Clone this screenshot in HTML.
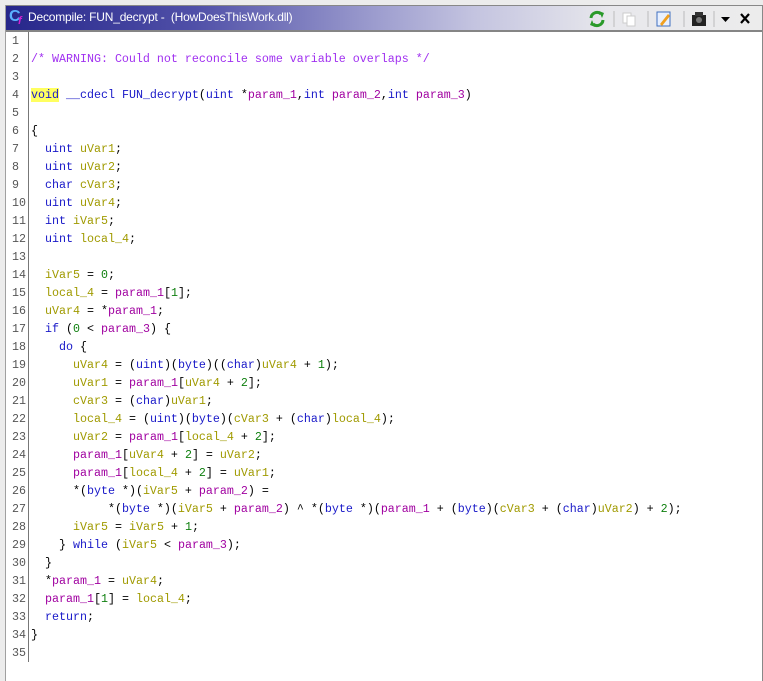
<!DOCTYPE html>
<html><head><meta charset="utf-8"><style>
body{margin:0;width:763px;height:681px;background:#ececec;position:relative;overflow:hidden;font-family:"Liberation Sans",sans-serif}
#win{position:absolute;left:5px;top:5px;width:756px;height:676px;background:#fff;border-left:1px solid #a0a0a0;border-right:2px solid #888}
#title{position:absolute;left:0;top:0;right:0;height:24px;border-top:1px solid #888;border-bottom:2px solid #858585;background:linear-gradient(90deg,#26268a 0%,#5050a8 25%,#a0a0d0 50%,#c4c4e0 62%,#e8e8ec 80%,#ececec 100%)}
#title .t{position:absolute;left:22px;top:4px;color:#fff;font-size:12px;letter-spacing:-0.2px}
#title .ic{position:absolute;left:3px;top:2px;color:#5ab0ff;font-weight:bold;font-size:16px}
#title .ic2{position:absolute;left:12px;top:9px;color:#d020d0;font-style:italic;font-weight:bold;font-size:11px}
#code{position:absolute;left:0;top:27px;font-family:"Liberation Mono",monospace;font-size:11.67px;line-height:18px;white-space:pre}
.ln{position:absolute;left:6px;width:20px;color:#555;text-align:left}
#sep{position:absolute;left:22px;top:27px;width:1px;height:630px;background:#777}
.l{position:absolute;left:25px;color:#000}
.k{color:#1818c8}.v{color:#a09a00}.p{color:#a000a0}.n{color:#108010}.c{color:#a030f0}.hl{background:#ffff60}
</style></head><body>
<div id="win">
<div id="title"><span class="ic">C</span><span class="ic2">f</span><span class="t">Decompile: FUN_decrypt - &nbsp;(HowDoesThisWork.dll)</span>
<svg style="position:absolute;left:580px;top:3px" width="170" height="20">
<path d="M5 9a6 6 0 0 1 10-4" fill="none" stroke="#2a9a2a" stroke-width="3"/><path d="M17 11a6 6 0 0 1-10 4" fill="none" stroke="#2a9a2a" stroke-width="3"/><path d="M13 2l5 2-2 5z M9 18l-5-2 2-5z" fill="#2a9a2a"/>
<line x1="28" y1="2" x2="28" y2="18" stroke="#bbb"/>
<rect x="37" y="4" width="8" height="10" fill="#fff" stroke="#ccc"/><rect x="41" y="7" width="8" height="10" fill="#fff" stroke="#ccc"/>
<line x1="62" y1="2" x2="62" y2="18" stroke="#bbb"/>
<rect x="71" y="3" width="13" height="14" fill="#e8f0ff" stroke="#4070c0"/><path d="M74 15l8-10 2 2-8 10z" fill="#f0a020"/>
<line x1="98" y1="2" x2="98" y2="18" stroke="#bbb"/>
<rect x="106" y="6" width="14" height="11" fill="#222"/><rect x="109" y="3" width="8" height="4" fill="#333"/><circle cx="113" cy="11" r="3" fill="#777"/>
<line x1="128" y1="2" x2="128" y2="18" stroke="#bbb"/>
<path d="M135 8h9l-4.5 5z" fill="#000"/>
<path d="M155 5l8 9M163 5l-8 9" stroke="#000" stroke-width="2.2"/>
</svg></div>
<div id="sep"></div>
<div id="code">
<div class="ln" style="top:0">1</div><div class="ln" style="top:18px">2</div><div class="ln" style="top:36px">3</div><div class="ln" style="top:54px">4</div><div class="ln" style="top:72px">5</div><div class="ln" style="top:90px">6</div><div class="ln" style="top:108px">7</div><div class="ln" style="top:126px">8</div><div class="ln" style="top:144px">9</div><div class="ln" style="top:162px">10</div><div class="ln" style="top:180px">11</div><div class="ln" style="top:198px">12</div><div class="ln" style="top:216px">13</div><div class="ln" style="top:234px">14</div><div class="ln" style="top:252px">15</div><div class="ln" style="top:270px">16</div><div class="ln" style="top:288px">17</div><div class="ln" style="top:306px">18</div><div class="ln" style="top:324px">19</div><div class="ln" style="top:342px">20</div><div class="ln" style="top:360px">21</div><div class="ln" style="top:378px">22</div><div class="ln" style="top:396px">23</div><div class="ln" style="top:414px">24</div><div class="ln" style="top:432px">25</div><div class="ln" style="top:450px">26</div><div class="ln" style="top:468px">27</div><div class="ln" style="top:486px">28</div><div class="ln" style="top:504px">29</div><div class="ln" style="top:522px">30</div><div class="ln" style="top:540px">31</div><div class="ln" style="top:558px">32</div><div class="ln" style="top:576px">33</div><div class="ln" style="top:594px">34</div><div class="ln" style="top:612px">35</div>
<div class="l" style="top:18px"><span class="c">/* WARNING: Could not reconcile some variable overlaps */</span></div>
<div class="l" style="top:54px"><span class="k hl">void</span> <span class="k">__cdecl</span> <span class="k">FUN_decrypt</span>(<span class="k">uint</span> *<span class="p">param_1</span>,<span class="k">int</span> <span class="p">param_2</span>,<span class="k">int</span> <span class="p">param_3</span>)</div>
<div class="l" style="top:90px">{</div>
<div class="l" style="top:108px">  <span class="k">uint</span> <span class="v">uVar1</span>;</div>
<div class="l" style="top:126px">  <span class="k">uint</span> <span class="v">uVar2</span>;</div>
<div class="l" style="top:144px">  <span class="k">char</span> <span class="v">cVar3</span>;</div>
<div class="l" style="top:162px">  <span class="k">uint</span> <span class="v">uVar4</span>;</div>
<div class="l" style="top:180px">  <span class="k">int</span> <span class="v">iVar5</span>;</div>
<div class="l" style="top:198px">  <span class="k">uint</span> <span class="v">local_4</span>;</div>
<div class="l" style="top:234px">  <span class="v">iVar5</span> = <span class="n">0</span>;</div>
<div class="l" style="top:252px">  <span class="v">local_4</span> = <span class="p">param_1</span>[<span class="n">1</span>];</div>
<div class="l" style="top:270px">  <span class="v">uVar4</span> = *<span class="p">param_1</span>;</div>
<div class="l" style="top:288px">  <span class="k">if</span> (<span class="n">0</span> &lt; <span class="p">param_3</span>) {</div>
<div class="l" style="top:306px">    <span class="k">do</span> {</div>
<div class="l" style="top:324px">      <span class="v">uVar4</span> = (<span class="k">uint</span>)(<span class="k">byte</span>)((<span class="k">char</span>)<span class="v">uVar4</span> + <span class="n">1</span>);</div>
<div class="l" style="top:342px">      <span class="v">uVar1</span> = <span class="p">param_1</span>[<span class="v">uVar4</span> + <span class="n">2</span>];</div>
<div class="l" style="top:360px">      <span class="v">cVar3</span> = (<span class="k">char</span>)<span class="v">uVar1</span>;</div>
<div class="l" style="top:378px">      <span class="v">local_4</span> = (<span class="k">uint</span>)(<span class="k">byte</span>)(<span class="v">cVar3</span> + (<span class="k">char</span>)<span class="v">local_4</span>);</div>
<div class="l" style="top:396px">      <span class="v">uVar2</span> = <span class="p">param_1</span>[<span class="v">local_4</span> + <span class="n">2</span>];</div>
<div class="l" style="top:414px">      <span class="p">param_1</span>[<span class="v">uVar4</span> + <span class="n">2</span>] = <span class="v">uVar2</span>;</div>
<div class="l" style="top:432px">      <span class="p">param_1</span>[<span class="v">local_4</span> + <span class="n">2</span>] = <span class="v">uVar1</span>;</div>
<div class="l" style="top:450px">      *(<span class="k">byte</span> *)(<span class="v">iVar5</span> + <span class="p">param_2</span>) =</div>
<div class="l" style="top:468px">           *(<span class="k">byte</span> *)(<span class="v">iVar5</span> + <span class="p">param_2</span>) ^ *(<span class="k">byte</span> *)(<span class="p">param_1</span> + (<span class="k">byte</span>)(<span class="v">cVar3</span> + (<span class="k">char</span>)<span class="v">uVar2</span>) + <span class="n">2</span>);</div>
<div class="l" style="top:486px">      <span class="v">iVar5</span> = <span class="v">iVar5</span> + <span class="n">1</span>;</div>
<div class="l" style="top:504px">    } <span class="k">while</span> (<span class="v">iVar5</span> &lt; <span class="p">param_3</span>);</div>
<div class="l" style="top:522px">  }</div>
<div class="l" style="top:540px">  *<span class="p">param_1</span> = <span class="v">uVar4</span>;</div>
<div class="l" style="top:558px">  <span class="p">param_1</span>[<span class="n">1</span>] = <span class="v">local_4</span>;</div>
<div class="l" style="top:576px">  <span class="k">return</span>;</div>
<div class="l" style="top:594px">}</div>
</div>
</div>
</body></html>
